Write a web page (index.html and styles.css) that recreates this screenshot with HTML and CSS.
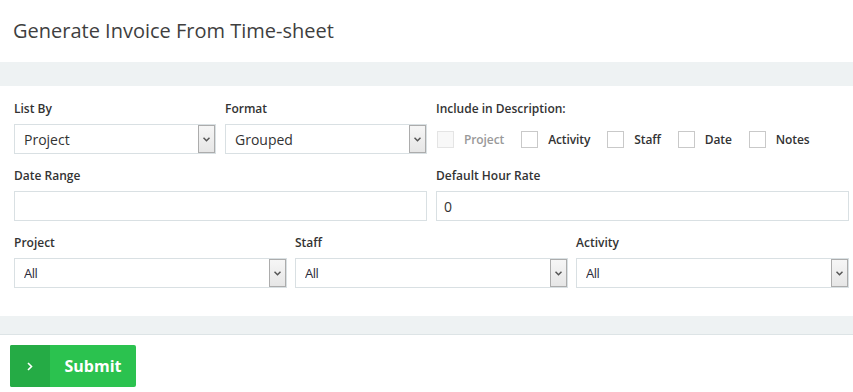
FILE: index.html
```html
<!DOCTYPE html>
<html lang="en">
<head>
    <meta charset="UTF-8">
    <meta name="viewport" content="width=device-width, initial-scale=1.0">
    <title>Generate Invoice From Time-sheet</title>
    <link rel="stylesheet" href="styles.css">
</head>
<body>
    <div class="page-title">
        <h1>Generate Invoice From Time-sheet</h1>
    </div>

    <div class="band"></div>

    <form class="form">
        <div class="row row-4">
            <div class="group">
                <label class="label">List By</label>
                <div class="select-box">
                    <select class="select">
                        <option>Project</option>
                    </select>
                    <span class="arrow"><svg width="7" height="5" viewBox="0 0 7 5"><path d="M0.5 0.8 L3.5 3.8 L6.5 0.8" fill="none" stroke="#555" stroke-width="1.5"/></svg></span>
                </div>
            </div>
            <div class="group">
                <label class="label">Format</label>
                <div class="select-box">
                    <select class="select">
                        <option>Grouped</option>
                    </select>
                    <span class="arrow"><svg width="7" height="5" viewBox="0 0 7 5"><path d="M0.5 0.8 L3.5 3.8 L6.5 0.8" fill="none" stroke="#555" stroke-width="1.5"/></svg></span>
                </div>
            </div>
            <div class="group span-2">
                <label class="label">Include in Description:</label>
                <div class="checks">
                    <label class="check disabled"><span class="box"></span>Project</label>
                    <label class="check"><span class="box"></span>Activity</label>
                    <label class="check"><span class="box"></span>Staff</label>
                    <label class="check"><span class="box"></span>Date</label>
                    <label class="check"><span class="box"></span>Notes</label>
                </div>
            </div>
        </div>

        <div class="row row-2">
            <div class="group">
                <label class="label">Date Range</label>
                <input class="input" type="text" value="">
            </div>
            <div class="group">
                <label class="label">Default Hour Rate</label>
                <input class="input" type="text" value="0">
            </div>
        </div>

        <div class="row row-3">
            <div class="group">
                <label class="label">Project</label>
                <div class="select-box">
                    <select class="select all">
                        <option>All</option>
                    </select>
                    <span class="arrow"><svg width="7" height="5" viewBox="0 0 7 5"><path d="M0.5 0.8 L3.5 3.8 L6.5 0.8" fill="none" stroke="#555" stroke-width="1.5"/></svg></span>
                </div>
            </div>
            <div class="group">
                <label class="label">Staff</label>
                <div class="select-box">
                    <select class="select all">
                        <option>All</option>
                    </select>
                    <span class="arrow"><svg width="7" height="5" viewBox="0 0 7 5"><path d="M0.5 0.8 L3.5 3.8 L6.5 0.8" fill="none" stroke="#555" stroke-width="1.5"/></svg></span>
                </div>
            </div>
            <div class="group">
                <label class="label">Activity</label>
                <div class="select-box">
                    <select class="select all">
                        <option>All</option>
                    </select>
                    <span class="arrow"><svg width="7" height="5" viewBox="0 0 7 5"><path d="M0.5 0.8 L3.5 3.8 L6.5 0.8" fill="none" stroke="#555" stroke-width="1.5"/></svg></span>
                </div>
            </div>
        </div>
    </form>

    <div class="band band-bottom"></div>

    <div class="actions">
        <button class="submit-btn" type="button">
            <span class="btn-icon"><svg width="6" height="9" viewBox="0 0 6 9"><path d="M1 1 L4.5 4.5 L1 8" fill="none" stroke="#fff" stroke-width="1.6"/></svg></span>
            <span class="btn-text">Submit</span>
        </button>
    </div>
</body>
</html>
```

FILE: styles.css
```css
* {
    margin: 0;
    padding: 0;
    box-sizing: border-box;
}

body {
    font-family: 'Open Sans', 'Liberation Sans', sans-serif;
    background: white;
    color: #333;
}

.page-title {
    height: 62px;
    padding: 0 13px;
    display: flex;
    align-items: center;
}

.page-title h1 {
    font-size: 20px;
    font-weight: normal;
    color: #3f3f3f;
    margin-top: -2px;
}

.band {
    height: 24px;
    background: #eef2f3;
}

.band-bottom {
    height: 19px;
    border-bottom: 1px solid #dde4e6;
}

.form {
    padding: 14px 4px 28px 14px;
}

.row {
    display: grid;
    gap: 9px;
    margin-bottom: 13px;
}

.row:last-child {
    margin-bottom: 0;
}

.row-4 {
    grid-template-columns: repeat(4, 1fr);
}

.row-2 {
    grid-template-columns: repeat(2, 1fr);
}

.row-3 {
    grid-template-columns: repeat(3, 1fr);
    gap: 8px;
}

.span-2 {
    grid-column: span 2;
}

.label {
    display: block;
    font-size: 12px;
    font-weight: 600;
    line-height: 17px;
    margin-bottom: 7px;
    color: #333;
}

.select-box {
    display: flex;
    height: 30px;
    border: 1px solid #d9e0e3;
    background: white;
}

.select {
    flex: 1;
    appearance: none;
    -webkit-appearance: none;
    border: none;
    background: transparent;
    font-family: 'Open Sans', 'Liberation Sans', sans-serif;
    font-size: 14px;
    color: #333;
    padding-left: 9px;
    outline: none;
}

.select.all {
    font-size: 13px;
    letter-spacing: -0.5px;
    color: #2b2b3b;
}

.arrow {
    width: 17px;
    border: 1px solid #acacac;
    background: linear-gradient(#f6f6f6, #e6e6e6);
    display: flex;
    align-items: center;
    justify-content: center;
}

.input {
    display: block;
    width: 100%;
    height: 30px;
    border: 1px solid #d9e0e3;
    padding: 0 7px;
    font-family: 'Open Sans', 'Liberation Sans', sans-serif;
    font-size: 14px;
    color: #333;
    outline: none;
}

.checks {
    display: flex;
    align-items: center;
    height: 30px;
    padding-left: 1px;
    gap: 17px;
}

.check {
    display: flex;
    align-items: center;
    gap: 10px;
    font-size: 12px;
    font-weight: 600;
    letter-spacing: -0.1px;
    color: #333;
}

.box {
    width: 17px;
    height: 17px;
    border: 1px solid #c9c9c9;
    background: white;
}

.check.disabled {
    color: #999;
}

.check.disabled .box {
    border-color: #e4e4e4;
    background: #f8f8f8;
}

.actions {
    padding: 10px;
}

.submit-btn {
    display: flex;
    height: 42px;
    width: 126px;
    border: none;
    border-radius: 2px;
    overflow: hidden;
    background: #2bc24f;
    color: white;
    cursor: pointer;
    font-family: 'Open Sans', 'Liberation Sans', sans-serif;
}

.btn-icon {
    width: 40px;
    background: #25ab45;
    display: flex;
    align-items: center;
    justify-content: center;
}

.btn-text {
    flex: 1;
    display: flex;
    align-items: center;
    justify-content: center;
    font-size: 16px;
    font-weight: bold;
}
```
